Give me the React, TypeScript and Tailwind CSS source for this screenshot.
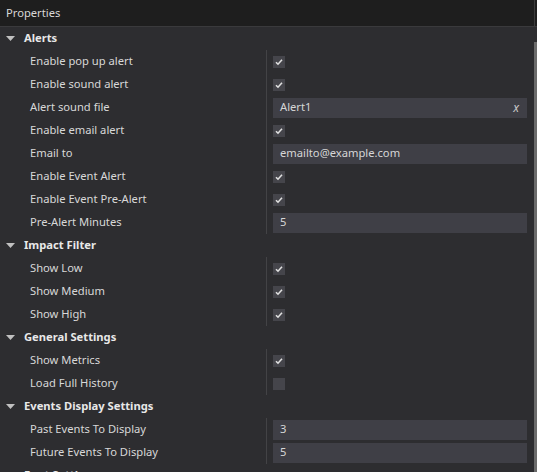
import React from 'react';

type Item =
  | { label: string; kind: 'check'; checked: boolean }
  | { label: string; kind: 'text'; value: string }
  | { label: string; kind: 'file'; value: string };

interface Section {
  title: string;
  items: Item[];
}

const sections: Section[] = [
  {
    title: 'Alerts',
    items: [
      { label: 'Enable pop up alert', kind: 'check', checked: true },
      { label: 'Enable sound alert', kind: 'check', checked: true },
      { label: 'Alert sound file', kind: 'file', value: 'Alert1' },
      { label: 'Enable email alert', kind: 'check', checked: true },
      { label: 'Email to', kind: 'text', value: 'emailto@example.com' },
      { label: 'Enable Event Alert', kind: 'check', checked: true },
      { label: 'Enable Event Pre-Alert', kind: 'check', checked: true },
      { label: 'Pre-Alert Minutes', kind: 'text', value: '5' },
    ],
  },
  {
    title: 'Impact Filter',
    items: [
      { label: 'Show Low', kind: 'check', checked: true },
      { label: 'Show Medium', kind: 'check', checked: true },
      { label: 'Show High', kind: 'check', checked: true },
    ],
  },
  {
    title: 'General Settings',
    items: [
      { label: 'Show Metrics', kind: 'check', checked: true },
      { label: 'Load Full History', kind: 'check', checked: false },
    ],
  },
  {
    title: 'Events Display Settings',
    items: [
      { label: 'Past Events To Display', kind: 'text', value: '3' },
      { label: 'Future Events To Display', kind: 'text', value: '5' },
    ],
  },
  {
    title: 'Font Settings',
    items: [],
  },
];

function Checkbox({ checked }: { checked: boolean }) {
  return (
    <div className="w-[12px] h-[12px] bg-[#45454b] flex items-center justify-center">
      {checked && (
        <svg width="8" height="8" viewBox="0 0 8 8">
          <path d="M1 4.2 L3 6.2 L7 1.8" fill="none" stroke="#e0e0e0" strokeWidth="1.6" />
        </svg>
      )}
    </div>
  );
}

function Value({ item }: { item: Item }) {
  if (item.kind === 'check') {
    return <Checkbox checked={item.checked} />;
  }
  return (
    <div className="h-[20px] w-[254px] bg-[#3f3f46] flex items-center justify-between pl-[7px] pr-[8px] text-[#d6d6d6]">
      <span>{item.value}</span>
      {item.kind === 'file' && <span className="italic text-[#c8c8c8] text-[12px]">x</span>}
    </div>
  );
}

export default function App() {
  return (
    <div
      className="w-[537px] h-[472px] overflow-hidden bg-[#2d2d30] flex flex-col text-[11.2px] text-[#d8d8d8]"
      style={{ fontFamily: '"Noto Sans", "Open Sans", sans-serif' }}
    >
      <div className="h-[27px] shrink-0 bg-[#1e1e1e] border-b border-[#3a3a3c] flex">
        <div className="flex-1 flex items-center pl-[6px] text-[#d8d8d8]">Properties</div>
        <div className="w-[3px] border-l border-[#3c3c3c]" />
      </div>
      <div className="flex flex-1 min-h-0">
        <div className="flex-1 flex flex-col">
          {sections.map((section) => (
            <div key={section.title} className="flex flex-col">
              <div className="h-[23px] flex items-center shrink-0">
                <svg width="24" height="23" viewBox="0 0 24 23" className="shrink-0">
                  <path d="M6 9 L15 9 L10.5 14 Z" fill="#c0c0c0" />
                </svg>
                <span className="font-bold text-[#e8e8e8]">{section.title}</span>
              </div>
              {section.items.map((item) => (
                <div key={item.label} className="h-[23px] flex shrink-0">
                  <div className="w-[267px] pl-[30px] flex items-center border-r border-[#434346]">
                    {item.label}
                  </div>
                  <div className="flex-1 flex items-center pl-[6px]">
                    <Value item={item} />
                  </div>
                </div>
              ))}
            </div>
          ))}
        </div>
        <div className="w-[3px] flex flex-col shrink-0">
          <div className="h-[15px] bg-[#2d2d30]" />
          <div className="flex-1 bg-[#6b6b6b]" />
        </div>
      </div>
    </div>
  );
}
